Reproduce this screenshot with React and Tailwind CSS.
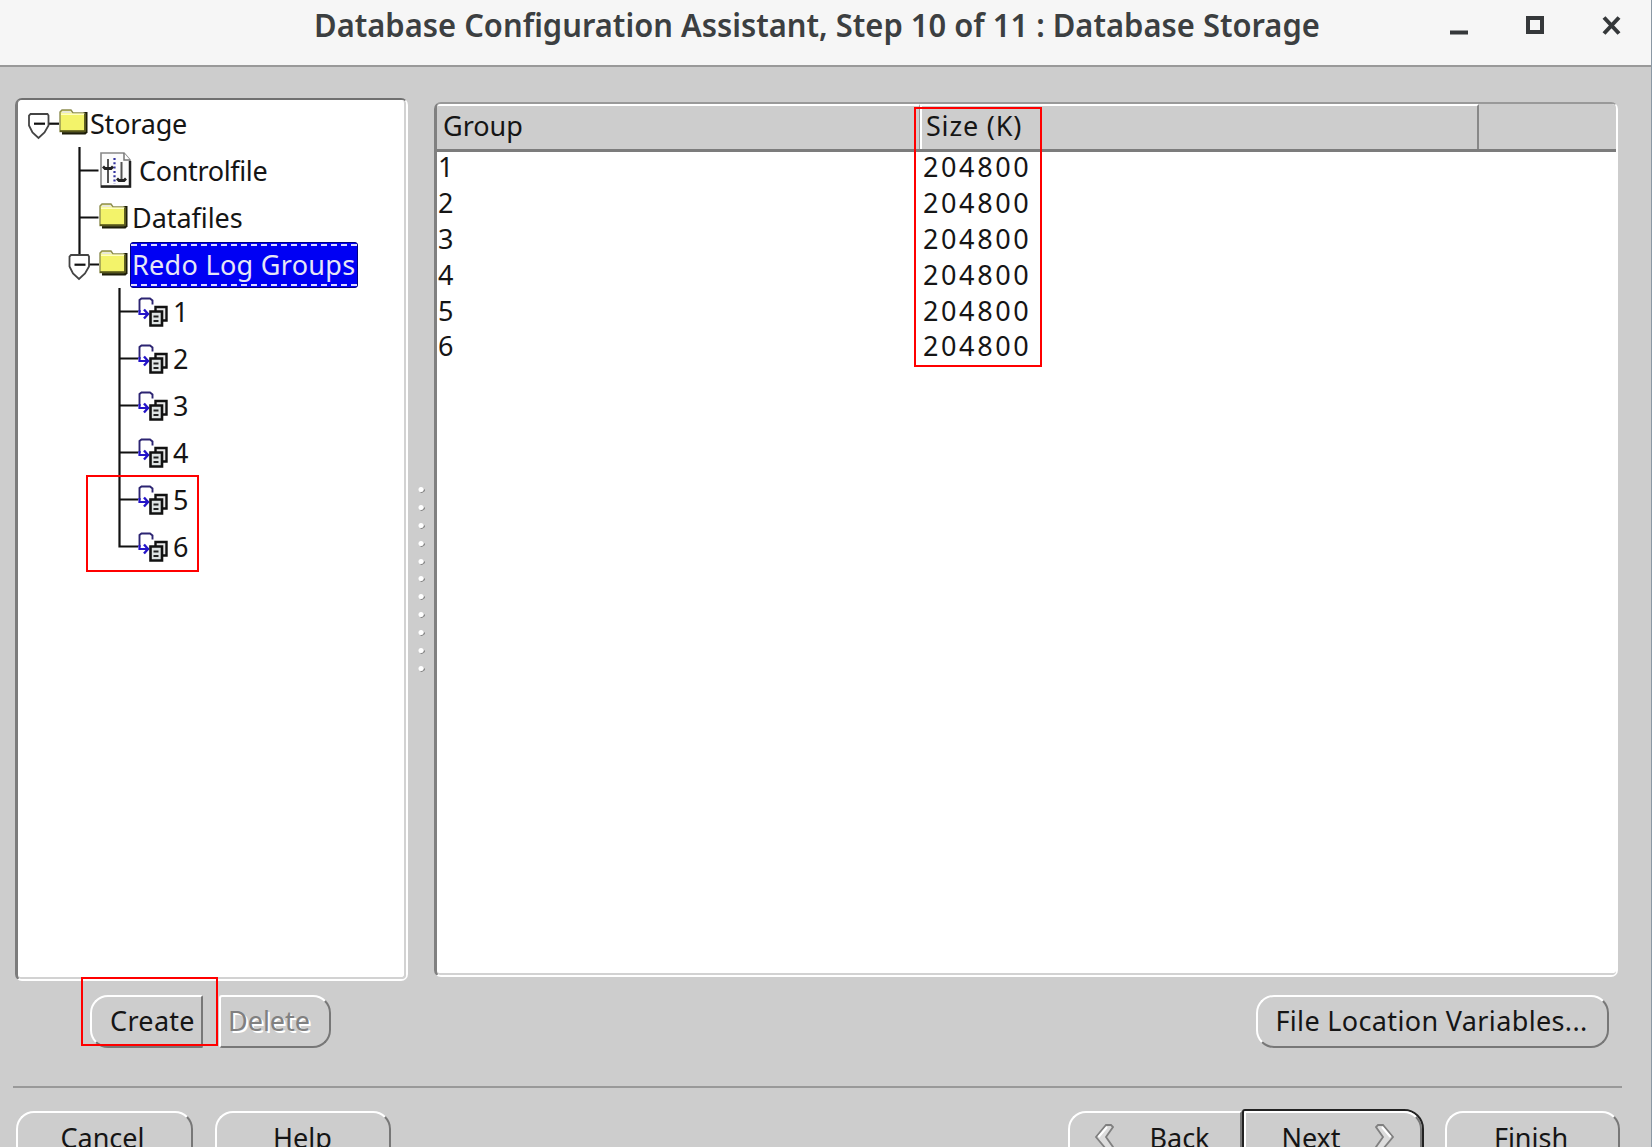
const noto = "font-['Noto_Sans',sans-serif]";

function Shield({ x }) {
  return (
    <g>
      <path d={`M${x + 1.5} 14h17l1 1.5v10l-4 7-6 5.5-6-5.5-3.5-7v-10z`} fill="#fff" stroke="#444" strokeWidth="1.8" />
      <path d={`M${x + 5} 23.7h11`} stroke="#111" strokeWidth="2.2" />
    </g>
  );
}

function RootGutter() {
  return (
    <svg width="41" height="47" className="shrink-0">
      <path d="M31 23.7h10" stroke="#111" strokeWidth="2.2" />
      <Shield x={11} />
    </svg>
  );
}

function BranchGutter({ expander }) {
  return (
    <svg width="81" height="47" className="shrink-0">
      <path d={expander ? "M61.5 0v14M71 23.5h10" : "M61.5 0v47M61.5 23.5h19"} stroke="#111" strokeWidth="2.2" />
      {expander && <Shield x={51.5} />}
    </svg>
  );
}

function LeafGutter({ last }) {
  return (
    <svg width="120" height="47" className="shrink-0">
      <path d={last ? "M101.5 0v24.5M101.5 23.5h19" : "M101.5 0v47M101.5 23.5h19"} stroke="#111" strokeWidth="2.2" />
    </svg>
  );
}

function Folder() {
  return (
    <svg width="29" height="47" className="shrink-0">
      <path d="M25 12h3.500v20.500l-2 2H3V32z" fill="#1c1c08" />
      <path d="M1 12l2-2h9l2 3h11l1 1v16.500l-1 1H1z" fill="#f3f36a" stroke="#8d8d50" strokeWidth="1.4" />
      <path d="M2 13l1.500-2h8l1.500 2z" fill="#e8e8d8" />
      <path d="M2 14.200h23" stroke="#ffffc8" strokeWidth="1.500" />
      <path d="M1 31.200h25V14" fill="none" stroke="#55551a" strokeWidth="1.700" />
    </svg>
  );
}

function ControlIcon() {
  return (
    <svg width="33" height="47" className="shrink-0">
      <path d="M2 6h23l6 7v27H2z" fill="#fcfcfc" stroke="#888" strokeWidth="1.600" />
      <path d="M2 39.500h29V14" fill="none" stroke="#222" strokeWidth="2.500" />
      <path d="M25 6v7h6" fill="#fff" stroke="#777" strokeWidth="1.500" />
      <path d="M9 12v24M22.500 15v20" stroke="#555" strokeWidth="2" />
      <path d="M15.500 11v26" stroke="#3333a0" strokeWidth="2.200" strokeDasharray="2 2.300" />
      <path d="M4 19.500l2 2h6l2-2M18 31.500l2 2h5l2-2" fill="none" stroke="#222" strokeWidth="2.800" />
    </svg>
  );
}

function LogIcon() {
  return (
    <svg width="31" height="47" className="shrink-0">
      <path d="M1.500 24V12l2-1.500h8.500l2.500 2v4" fill="none" stroke="#2c2472" strokeWidth="1.900" />
      <path d="M1.500 22v4h9" fill="none" stroke="#2414c8" strokeWidth="2.200" />
      <path d="M6 21.500l4 4.500-4 4.500" fill="none" stroke="#2414c8" strokeWidth="2.400" />
      <path d="M17.500 19h11v13.500h-11z" fill="#e8e8e8" stroke="#111" strokeWidth="2.400" />
      <path d="M12.500 23.500h11.500v14h-11.500z" fill="#dfe4e4" stroke="#111" strokeWidth="2.600" />
      <path d="M15.500 28.500h5M15.500 33h5" stroke="#222" strokeWidth="2.200" />
    </svg>
  );
}

function Leaf({ label, last }) {
  return (
    <div className="flex h-[47px] items-center">
      <LeafGutter last={last} />
      <LogIcon />
      <span className="ml-[4px]">{label}</span>
    </div>
  );
}

function Tree() {
  return (
    <div className="h-[883px] w-[393px] shrink-0 rounded-[7px] border-[2px] border-l-[3px] border-b-white border-l-[#7c7c7c] border-r-white border-t-[#707070]">
      <div className="h-full rounded-[4px] border-b-2 border-r-2 border-[#d2d2d2] bg-white">
        <div className="flex h-[47px] items-center">
          <RootGutter />
          <Folder />
          <span className="ml-[2px] tracking-[-0.2px]">Storage</span>
        </div>
        <div className="flex h-[47px] items-center">
          <BranchGutter />
          <ControlIcon />
          <span className="ml-[7px] tracking-[-0.35px]">Controlfile</span>
        </div>
        <div className="flex h-[47px] items-center">
          <BranchGutter />
          <Folder />
          <span className="ml-[4px] tracking-[-0.05px]">Datafiles</span>
        </div>
        <div className="flex h-[47px] items-center">
          <BranchGutter expander />
          <Folder />
          <div className="ml-[2px] flex h-[46px] w-[228px] items-center rounded-[3px] border border-[#000080] bg-[#0000f4] py-[1px] text-[#e6e6f6]">
            <div className="flex h-[42px] w-full items-center border-y-2 border-dashed border-[#d8d8ff] pl-[1px] tracking-[0.3px] whitespace-nowrap">
              Redo Log Groups
            </div>
          </div>
        </div>
        {["1", "2", "3", "4", "5", "6"].map((n) => (
          <Leaf key={n} label={n} last={n === "6"} />
        ))}
      </div>
    </div>
  );
}

function Splitter() {
  return (
    <div className="flex w-[26px] shrink-0 flex-col items-center gap-[11.900px] pt-[389px]">
      {Array.from({ length: 11 }, (_, i) => (
        <svg key={i} width="7" height="6" className="shrink-0">
          <path d="M2 6L7 2v2L4 6z" fill="#888" />
          <circle cx="3" cy="2.500" r="2.500" fill="#fff" />
        </svg>
      ))}
    </div>
  );
}

function Table() {
  return (
    <div className="mt-[4px] h-[875px] w-[1184px] shrink-0 rounded-[7px] border-[2px] border-l-[3px] border-b-white border-l-[#808080] border-r-white border-t-[#999]">
      <div className="flex h-full flex-col overflow-hidden rounded-[4px] border-b-2 border-[#d2d2d2] bg-white">
        <div className="flex h-[48px] shrink-0 border-b-[3px] border-[#7c7c7c] bg-[#cdcdcd]">
          <div className="flex w-[483px] items-center border-r border-t-2 border-r-[#999] border-t-white pb-[5px] pl-[6px]">Group</div>
          <div className="flex w-[559px] items-center border-l-2 border-r-2 border-t-2 border-l-white border-r-[#888] border-t-white pb-[5px] pl-[4px] tracking-[0.8px]">
            Size (K)
          </div>
        </div>
        <div className="-mt-[3px]">
          {["1", "2", "3", "4", "5", "6"].map((n) => (
            <div key={n} className="flex h-[35.800px] items-center">
              <span className="w-[485px] pl-[1px]">{n}</span>
              <span className="pl-px tracking-[2.600px]">204800</span>
            </div>
          ))}
        </div>
      </div>
    </div>
  );
}

function Button({ className, children }) {
  return (
    <div
      className={`flex shrink-0 items-center justify-center border-2 border-b-[#777] border-l-white border-r-[#777] border-t-white pb-[2px] whitespace-nowrap ${className}`}
    >
      {children}
    </div>
  );
}

function Chevron({ flip }) {
  return (
    <svg width="20" height="26" viewBox="0 0 20 26" className={flip ? "-scale-x-100" : ""}>
      <path d="M12 1h5l2 2-7 10 7 10-2 2h-5L2 13z" fill="#dcdcdc" stroke="#808080" strokeWidth="1.800" />
      <path d="M13 3L4.500 13" stroke="#fff" strokeWidth="2" />
    </svg>
  );
}

export default function App() {
  return (
    <div className={`relative h-[1147px] w-[1652px] overflow-hidden border-r border-[#8a98a4] bg-[#cdcdcd] text-[27px] leading-none text-[#151515] ${noto}`}>
      <header className="flex h-[67px] items-center border-b-2 border-[#999] bg-[#f6f6f6] pb-[16px] text-[#3c3f41]">
        <h1 className="ml-[314px] w-[1130px] origin-left scale-x-[0.966] text-[32px] font-semibold whitespace-nowrap">
          Database Configuration Assistant, Step 10 of 11 : Database Storage
        </h1>
        <svg width="180" height="50">
          <path d="M6 32.500h18" stroke="#35383a" strokeWidth="4" />
          <path d="M84 18h14v14H84z" fill="none" stroke="#35383a" strokeWidth="4" />
          <path d="M160 17.500l15 16M175 17.500l-15 16" stroke="#35383a" strokeWidth="4" />
        </svg>
      </header>
      <main className="flex pl-[15px] pt-[31px]">
        <Tree />
        <Splitter />
        <Table />
      </main>
      <div className="flex pl-[90px] pt-[14px]">
        <Button className="h-[53px] w-[113px] rounded-l-[18px] rounded-r-[2px] pl-[12px] tracking-[0.3px]">Create</Button>
        <Button className="ml-[16px] h-[53px] w-[112px] rounded-l-[3px] rounded-r-[18px] pr-[12px] text-[#808080] [text-shadow:2px_2px_0_#fff]">
          Delete
        </Button>
        <Button className="ml-[925px] h-[53px] w-[353px] rounded-[18px] pr-[2px] tracking-[0.35px]">File Location Variables...</Button>
      </div>
      <hr className="ml-[13px] mt-[38px] w-[1609px] border-t-2 border-[#999]" />
      <footer className="flex pl-[16px] pt-[21px]">
        <Button className="mt-[2px] h-[54px] w-[177px] rounded-[18px] pr-[4px]">Cancel</Button>
        <Button className="ml-[22px] mt-[2px] h-[54px] w-[176px] rounded-[18px] pr-px">Help</Button>
        <Button className="ml-[677px] mt-[2px] h-[54px] w-[174px] gap-[35px] rounded-l-[18px] pr-[6px]">
          <Chevron />
          Back
        </Button>
        <div className="h-[58px] w-[182px] shrink-0 rounded-l-[3px] rounded-r-[20px] border-2 border-[#222]">
          <Button className="h-[54px] w-[178px] gap-[34px] rounded-l-[2px] rounded-r-[18px] pl-[10px]">
            Next
            <Chevron flip />
          </Button>
        </div>
        <Button className="ml-[21px] mt-[2px] h-[54px] w-[175px] rounded-[18px] pr-[3px]">Finish</Button>
      </footer>
      <div className="absolute left-[914px] top-[107px] h-[260px] w-[128px] border-2 border-[#f00]" />
      <div className="absolute left-[86px] top-[475px] h-[97px] w-[113px] border-2 border-[#f00]" />
      <div className="absolute left-[81px] top-[977px] h-[69px] w-[137px] border-2 border-[#f00]" />
    </div>
  );
}
